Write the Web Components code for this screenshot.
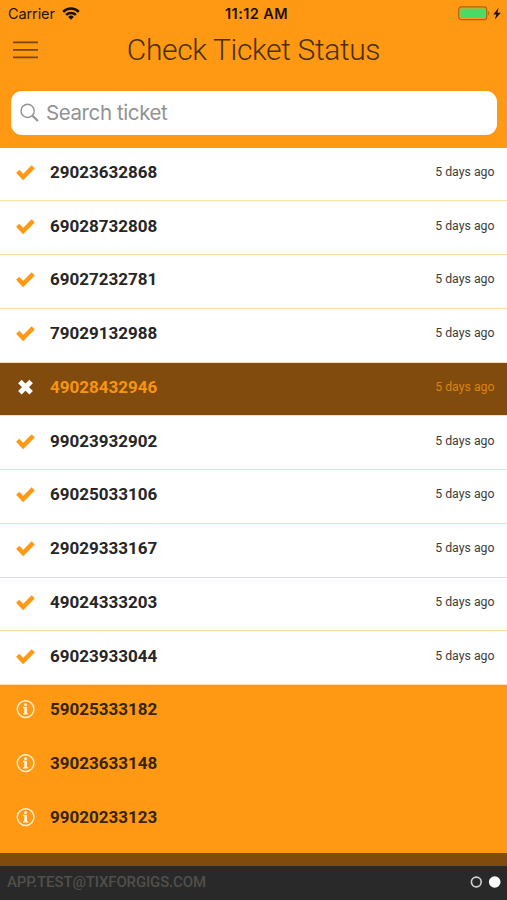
<!DOCTYPE html>
<html lang="en">
<head>
<meta charset="utf-8">
<title>Check Ticket Status</title>
<style>
  body {
    margin: 0;
    font-family: Roboto, "Liberation Sans", sans-serif;
  }
</style>
</head>
<body>
<ticket-app>
  <status-bar slot="top" carrier="Carrier" time="11:12 AM"></status-bar>
  <title-bar slot="top">Check Ticket Status</title-bar>
  <search-box slot="top" placeholder="Search ticket"></search-box>
  <ticket-row state="ok" when="5 days ago">29023632868</ticket-row>
  <ticket-row state="ok" when="5 days ago">69028732808</ticket-row>
  <ticket-row state="ok" when="5 days ago">69027232781</ticket-row>
  <ticket-row state="ok" when="5 days ago">79029132988</ticket-row>
  <ticket-row state="bad" when="5 days ago">49028432946</ticket-row>
  <ticket-row state="ok" when="5 days ago">99023932902</ticket-row>
  <ticket-row state="ok" when="5 days ago">69025033106</ticket-row>
  <ticket-row state="ok" when="5 days ago">29029333167</ticket-row>
  <ticket-row state="ok" when="5 days ago">49024333203</ticket-row>
  <ticket-row state="ok" when="5 days ago">69023933044</ticket-row>
  <ticket-row state="info">59025333182</ticket-row>
  <ticket-row state="info">39023633148</ticket-row>
  <ticket-row state="info">99020233123</ticket-row>
  <account-bar slot="bottom">APP.TEST@TIXFORGIGS.COM</account-bar>
</ticket-app>

<script>
class TicketApp extends HTMLElement {
  constructor() {
    super();
    const shadow = this.attachShadow({ mode: "open" });
    shadow.innerHTML = `
    <style>
      :host {
        display: flex;
        flex-direction: column;
        height: 900px;
        overflow: hidden;
        background: #ff9913;
      }
      header { flex: none; height: 147.6px; }
      main { flex: 1; min-height: 0; overflow: hidden; }
    </style>
    <header><slot name="top"></slot></header>
    <main><slot></slot></main>
    <slot name="bottom"></slot>
    `;
  }
}

class StatusBar extends HTMLElement {
  constructor() {
    super();
    const shadow = this.attachShadow({ mode: "open" });
    shadow.innerHTML = `
    <style>
      :host {
        display: grid;
        grid-template-columns: 1fr auto 1fr;
        align-items: center;
        height: 27px;
        padding: 0 5px 0 8px;
        font: 14.5px/27px Inter, Roboto, sans-serif;
        color: #20160a;
      }
      .left, .right { display: flex; align-items: center; }
      .left { gap: 7px; }
      .carrier { letter-spacing: -0.1px; }
      .time { font-weight: 600; font-size: 14.5px; letter-spacing: 0.4px; color: #1a1006; padding-left: 3px; }
      .right { justify-content: flex-end; }
      svg { display: block; }
    </style>
    <div class="left">
      <span class="carrier">${this.getAttribute("carrier")}</span>
      <svg width="18" height="13" viewBox="0 0 18 13" fill="none" stroke="#1a1006" stroke-width="2.5">
        <path d="M1.2 4.8a11 11 0 0 1 15.6 0"/>
        <path d="M4.1 7.9a7 7 0 0 1 9.8 0"/>
        <path d="M9 12.7 6.2 9.9a4 4 0 0 1 5.6 0z" fill="#1a1006" stroke="none"/>
      </svg>
    </div>
    <span class="time">${this.getAttribute("time")}</span>
    <div class="right">
      <svg width="44" height="16" viewBox="0 0 44 16">
        <rect x=".7" y=".9" width="28" height="12.8" rx="2.8" fill="none" stroke="#a5680f" stroke-width="1.2"/>
        <rect x="2.3" y="2.5" width="24.8" height="9.6" rx="1.2" fill="#4cd964"/>
        <path d="M30.2 5q2.4 2.3 0 4.6z" fill="#a5680f"/>
        <path d="M40.6 1.7 35.3 8.4h3.1l-1.6 5.2 6-6.9h-3.4z" fill="#1a1006"/>
      </svg>
    </div>
    `;
  }
}

class TitleBar extends HTMLElement {
  constructor() {
    super();
    const shadow = this.attachShadow({ mode: "open" });
    shadow.innerHTML = `
    <style>
      :host {
        display: grid;
        grid-template-columns: 38px 1fr 38px;
        align-items: center;
        height: 46px;
      }
      h1 {
        margin: 0;
        font-size: 30px;
        font-weight: 300;
        line-height: 46px;
        letter-spacing: -0.36px;
        text-align: center;
        white-space: nowrap;
        color: #4a300d;
      }
      svg { display: block; margin-left: 13px; }
    </style>
    <svg width="25" height="20" viewBox="0 0 25 20" stroke="#75480d" stroke-width="1.7">
      <path d="M0 2.3h25M0 9.8h25M0 17.4h25"/>
    </svg>
    <h1><slot></slot></h1>
    `;
  }
}

class SearchBox extends HTMLElement {
  constructor() {
    super();
    const shadow = this.attachShadow({ mode: "open" });
    shadow.innerHTML = `
    <style>
      :host {
        display: flex;
        align-items: center;
        height: 44px;
        margin: 18px 10px 0 10.5px;
        padding-left: 9px;
        box-sizing: border-box;
        border-radius: 11px;
        background: #fff;
        color: #929292;
        font: 20.5px/44px Inter, Roboto, sans-serif;
      }
      svg { display: block; margin-right: 6.5px; }
      span { letter-spacing: -0.4px; }
    </style>
    <svg width="20" height="20" viewBox="0 0 20 20" fill="none" stroke="#929292">
      <circle cx="7.6" cy="7.9" r="6.6" stroke-width="1.4"/>
      <path d="m12.4 12.8 5.6 5.2" stroke-width="2.1"/>
    </svg>
    <span>${this.getAttribute("placeholder")}</span>
    `;
  }
}

const icons = {
  ok: `<path d="M2.7 9.3 8.1 15 18.2 4.9" fill="none" stroke="#ff9913" stroke-width="4.4"/>`,
  bad: `<path d="M4.9 4.6l11.2 11.2M16.1 4.6 4.9 15.8" fill="none" stroke="#fff" stroke-width="5"/>`,
  info: `<circle cx="10.6" cy="10.1" r="8.4" fill="none" stroke="#fff0d5" stroke-width="1.4"/>
    <circle cx="10.6" cy="5.6" r="1.5" fill="#fff0d5"/>
    <path d="M8 7.8h4v6.4h1.2v1.4H8v-1.4h1.2v-5H8z" fill="#fff0d5"/>`
};

class TicketRow extends HTMLElement {
  constructor() {
    super();
    const shadow = this.attachShadow({ mode: "open" });
    const when = this.getAttribute("when") || "";
    shadow.innerHTML = `
    <style>
      :host {
        display: flex;
        align-items: center;
        box-sizing: border-box;
        height: 53.75px;
        padding: 0 12.5px 4px 15px;
        border-bottom: 1px solid #ffdfae;
        background: #fff;
        color: #262626;
      }
      :host([state="bad"]) { background: #804b0d; color: #f79413; }
      :host([state="info"]) { background: #ff9913; border-color: #ff9913; color: #35250f; }
      svg { display: block; margin-right: 14px; }
      .code { flex: 1; font-size: 17px; font-weight: 700; }
      .when { font-size: 12.3px; color: #3c3c3c; }
      :host([state="bad"]) .when { color: #db8312; }
    </style>
    <svg width="21" height="20" viewBox="0 0 21 20">${icons[this.getAttribute("state")]}</svg>
    <span class="code"><slot></slot></span>
    <span class="when">${when}</span>
    `;
  }
}

class AccountBar extends HTMLElement {
  constructor() {
    super();
    const shadow = this.attachShadow({ mode: "open" });
    shadow.innerHTML = `
    <style>
      :host {
        display: flex;
        flex: none;
        align-items: center;
        box-sizing: border-box;
        height: 47px;
        padding: 0 6px 3px 7px;
        border-top: 13.4px solid #804b0d;
        background: #292929;
        color: #524f4a;
        font-size: 15px;
        font-weight: 500;
        letter-spacing: -0.14px;
      }
      .name { flex: 1; }
      svg { display: block; }
    </style>
    <span class="name"><slot></slot></span>
    <svg width="32" height="14" viewBox="0 0 32 14">
      <circle cx="7.3" cy="7" r="4.9" fill="none" stroke="#d2d2d2" stroke-width="1.6"/>
      <circle cx="25.7" cy="7" r="5.8" fill="#fff"/>
    </svg>
    `;
  }
}

// register every element used on the page
window.customElements.define("ticket-app", TicketApp);
window.customElements.define("status-bar", StatusBar);
window.customElements.define("title-bar", TitleBar);
window.customElements.define("search-box", SearchBox);
window.customElements.define("ticket-row", TicketRow);
window.customElements.define("account-bar", AccountBar);
</script>
</body>
</html>
